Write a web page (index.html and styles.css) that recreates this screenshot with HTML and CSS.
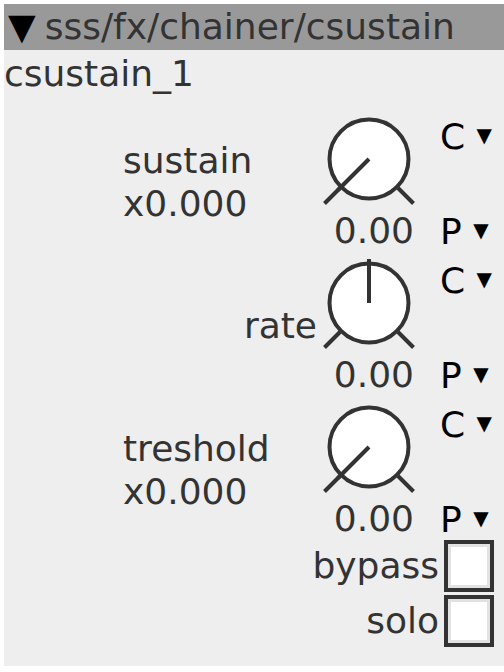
FILE: index.html
```html
<!DOCTYPE html>
<html lang="en">

<head>
    <meta charset="UTF-8">
    <meta name="viewport" content="width=device-width, initial-scale=1.0">
    <title>csustain</title>
    <link rel="stylesheet" href="styles.css">
</head>

<body>
    <div class="panel">
        <div class="panel__head">
            <span class="panel__arrow">▼</span>
            <span>sss/fx/chainer/csustain</span>
        </div>
        <div class="panel__body">
            <div class="panel__name">csustain_1</div>

            <div class="rows">
                <div class="row">
                    <div class="label">
                        <span>sustain</span>
                        <span>x0.000</span>
                    </div>
                    <div class="knob">
                        <svg class="knob__svg" width="94" height="94" viewBox="0 0 94 94">
                            <circle cx="47" cy="44" r="39.5" fill="#fff" stroke="#333" stroke-width="4" />
                            <line x1="18" y1="73" x2="2.5" y2="88.5" stroke="#333" stroke-width="4" />
                            <line x1="76" y1="73" x2="91.5" y2="88.5" stroke="#333" stroke-width="4" />
                            <line x1="47" y1="44" x2="16" y2="75" stroke="#333" stroke-width="4" />
                        </svg>
                        <div class="knob__value">0.00</div>
                    </div>
                    <div class="modes">
                        <div class="mode">C <span class="mode__arrow">▼</span></div>
                        <div class="mode">P <span class="mode__arrow">▼</span></div>
                    </div>
                </div>

                <div class="row">
                    <div class="label label--end">
                        <span>rate</span>
                    </div>
                    <div class="knob">
                        <svg class="knob__svg" width="94" height="94" viewBox="0 0 94 94">
                            <circle cx="47" cy="44" r="39.5" fill="#fff" stroke="#333" stroke-width="4" />
                            <line x1="18" y1="73" x2="2.5" y2="88.5" stroke="#333" stroke-width="4" />
                            <line x1="76" y1="73" x2="91.5" y2="88.5" stroke="#333" stroke-width="4" />
                            <line x1="47" y1="44" x2="47" y2="0" stroke="#333" stroke-width="4" />
                        </svg>
                        <div class="knob__value">0.00</div>
                    </div>
                    <div class="modes">
                        <div class="mode">C <span class="mode__arrow">▼</span></div>
                        <div class="mode">P <span class="mode__arrow">▼</span></div>
                    </div>
                </div>

                <div class="row">
                    <div class="label">
                        <span>treshold</span>
                        <span>x0.000</span>
                    </div>
                    <div class="knob">
                        <svg class="knob__svg" width="94" height="94" viewBox="0 0 94 94">
                            <circle cx="47" cy="44" r="39.5" fill="#fff" stroke="#333" stroke-width="4" />
                            <line x1="18" y1="73" x2="2.5" y2="88.5" stroke="#333" stroke-width="4" />
                            <line x1="76" y1="73" x2="91.5" y2="88.5" stroke="#333" stroke-width="4" />
                            <line x1="47" y1="44" x2="16" y2="75" stroke="#333" stroke-width="4" />
                        </svg>
                        <div class="knob__value">0.00</div>
                    </div>
                    <div class="modes">
                        <div class="mode">C <span class="mode__arrow">▼</span></div>
                        <div class="mode">P <span class="mode__arrow">▼</span></div>
                    </div>
                </div>
            </div>

            <div class="toggles">
                <label class="toggle">bypass <span class="toggle__box"></span></label>
                <label class="toggle">solo <span class="toggle__box"></span></label>
            </div>
        </div>
    </div>
</body>

</html>
```

FILE: styles.css
```css
body {
    margin: 0;
    background: #fff;
    font-family: "DejaVu Sans", sans-serif;
    font-size: 36px;
    color: #333;
}

.panel {
    margin: 4px 0 0 4px;
    background: #eee;
}

.panel__head {
    display: flex;
    align-items: center;
    height: 46px;
    line-height: 46px;
    padding-left: 4px;
    background: #999;
    white-space: nowrap;
    overflow: hidden;
}

.panel__arrow {
    color: #000;
    margin-right: 9px;
}

.panel__body {
    padding-bottom: 19px;
}

.panel__name {
    padding-top: 2px;
    line-height: 44px;
}

.rows {
    display: flex;
    flex-direction: column;
    gap: 7px;
    padding-top: 19px;
}

.row {
    display: grid;
    grid-template-columns: 1fr 94px 88px;
}

.label {
    display: flex;
    flex-direction: column;
    align-items: flex-start;
    justify-content: center;
    padding: 0 5px 4px 119px;
    line-height: 43px;
}

.label--end {
    align-items: flex-end;
    padding-left: 0;
}

.knob {
    display: flex;
    flex-direction: column;
    align-items: flex-end;
}

.knob__svg {
    display: block;
}

.knob__value {
    line-height: 40px;
    padding: 2px 2px 0 0;
}

.modes {
    display: flex;
    flex-direction: column;
    justify-content: space-between;
    height: 137px;
    padding-left: 24px;
    color: #000;
    white-space: nowrap;
}

.mode {
    line-height: 40px;
}

.mode__arrow {
    font-size: 20px;
    vertical-align: 7px;
}

.toggles {
    display: flex;
    flex-direction: column;
    align-items: flex-end;
    gap: 3px;
    padding-right: 10px;
}

.toggle {
    display: flex;
    align-items: center;
    gap: 5px;
    line-height: 40px;
}

.toggle__box {
    width: 42px;
    height: 44px;
    border: 4px solid #333;
    background: #fff;
    box-shadow: inset 0 0 0 3px #e2e2e2;
}
```
